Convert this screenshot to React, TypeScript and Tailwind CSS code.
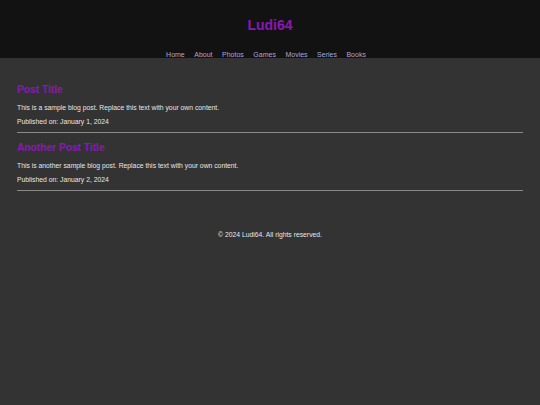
export default function App() {
  const posts = [
    {
      title: 'Post Title',
      body: 'This is a sample blog post. Replace this text with your own content.',
      date: 'January 1, 2024',
    },
    {
      title: 'Another Post Title',
      body: 'This is another sample blog post. Replace this text with your own content.',
      date: 'January 2, 2024',
    },
  ];
  const links = ['Home', 'About', 'Photos', 'Games', 'Movies', 'Series', 'Books'];

  return (
    <div className="min-h-[405px] bg-[#333333] font-['Liberation_Sans',Arial,sans-serif] text-[#e6e6e6]">
      <header className="flex h-[58px] flex-col items-center bg-[#121212]">
        <h1 className="mt-[16px] text-[14px] font-bold leading-[18px] text-[#8b18b4]">Ludi64</h1>
        <nav className="mt-[16px] flex gap-[9.5px] pr-[8px] text-[7px] leading-[9px] text-[#aca6dc]">
          {links.map((l) => (
            <a key={l} href="#">{l}</a>
          ))}
        </nav>
      </header>

      <main className="px-[17px] pt-[25px]">
        {posts.map((p) => (
          <article key={p.title} className="mb-[8px] border-b border-[#8a8a8a] pb-[6px]">
            <h2 className="text-[10.2px] font-bold leading-[13px] text-[#8b18b4]">{p.title}</h2>
            <p className="mt-[7px] text-[6.8px] leading-[9px]">{p.body}</p>
            <p className="mt-[5px] text-[6.8px] leading-[9px]">Published on: {p.date}</p>
          </article>
        ))}
      </main>

      <footer className="mt-[39px] text-center text-[6.8px] leading-[9px] text-[#e6e6e6]">
        © 2024 Ludi64. All rights reserved.
      </footer>
    </div>
  );
}
